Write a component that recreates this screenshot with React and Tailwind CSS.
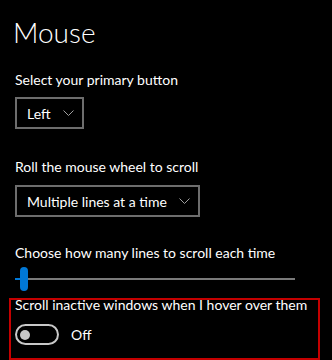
function Chevron() {
  return (
    <svg width="11" height="6" viewBox="0 0 11 6" fill="none" className="shrink-0">
      <path d="M0.5 0.5 L5.5 5.5 L10.5 0.5" stroke="#a0a0a0" strokeWidth="1" />
    </svg>
  );
}

function Dropdown({ label }) {
  return (
    <div className="inline-flex items-center h-[32px] border-2 border-[#6d6d6d] pl-[10px] pr-[8px] gap-[12px] text-[14px]">
      <span>{label}</span>
      <Chevron />
    </div>
  );
}

export default function App() {
  return (
    <div
      className="bg-black text-white w-[332px] h-[360px] overflow-hidden"
      style={{ fontFamily: 'Lato, "Open Sans", sans-serif' }}
    >
      <div className="pt-[13px]">
        {/* Title */}
        <h1 className="pl-[13px] text-[28px] font-light leading-[38px]">Mouse</h1>

        {/* Primary button */}
        <p className="pl-[15px] mt-[19px] text-[14px] leading-[20px]">Select your primary button</p>
        <div className="pl-[15px] mt-[7px] flex">
          <Dropdown label="Left" />
        </div>

        {/* Wheel */}
        <p className="pl-[15px] mt-[28px] text-[14px] leading-[20px]">Roll the mouse wheel to scroll</p>
        <div className="pl-[15px] mt-[8px] flex">
          <Dropdown label="Multiple lines at a time" />
        </div>

        {/* Lines slider */}
        <p className="pl-[15px] mt-[26px] text-[14px] leading-[20px]">Choose how many lines to scroll each time</p>
        <div className="ml-[15px] mt-[4px] w-[280px] h-[24px] flex items-center">
          <div className="h-[2px] w-[5px] bg-[#0078d7]" />
          <div className="h-[24px] w-[8px] rounded-full bg-[#0078d7]" />
          <div className="h-[2px] flex-1 bg-[#7a7a7a]" />
        </div>

        {/* Scroll inactive */}
        <div className="ml-[9px] mt-[7px] w-[311px] h-[62px] border-2 border-[#c50000] pl-[4px]">
          <p className="-mt-[5px] text-[14px] leading-[20px] whitespace-nowrap">
            Scroll inactive windows when I hover over them
          </p>
          <div className="flex items-center mt-[9px] gap-[12px]">
            <div className="w-[44px] h-[21px] rounded-full border-2 border-[#c8c8c8] flex items-center pl-[3px]">
              <div className="w-[10px] h-[10px] rounded-full bg-[#c8c8c8]" />
            </div>
            <span className="text-[14px] leading-[20px]">Off</span>
          </div>
        </div>
      </div>
    </div>
  );
}
